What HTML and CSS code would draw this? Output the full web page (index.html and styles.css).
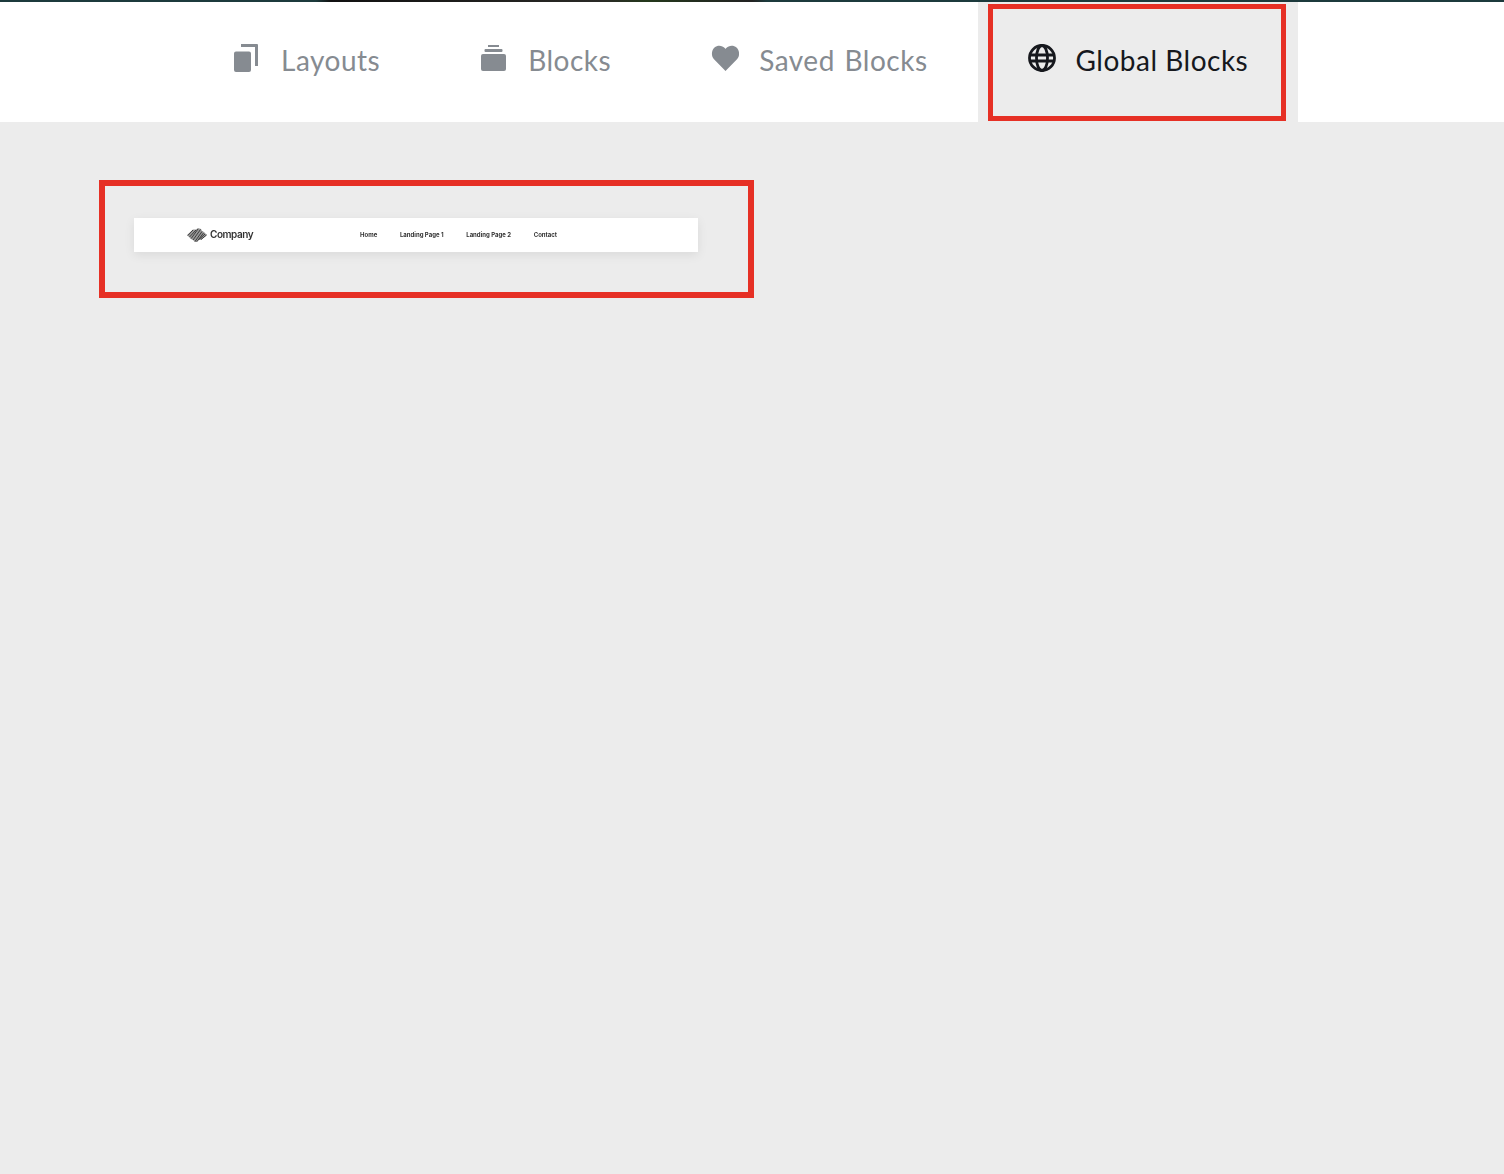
FILE: index.html
```html
<!DOCTYPE html>
<html lang="en">
<head>
<meta charset="utf-8">
<title>Global Blocks</title>
<link rel="stylesheet" href="styles.css">
</head>
<body>
<div class="strip"></div>
<nav class="tabs">
  <a class="tab">
    <svg class="icon" viewBox="0 0 28 28" width="28" height="28"><path d="M1 9.500a2 2 0 0 1 2-2h13a2 2 0 0 1 2 2V26a2 2 0 0 1-2 2H3a2 2 0 0 1-2-2z"/><path d="M8 0h16a1 1 0 0 1 1 1v21h-3V3H8z"/></svg>
    <span>Layouts</span>
  </a>
  <a class="tab">
    <svg class="icon" viewBox="0 0 28 28" width="28" height="28"><rect x="8" y="1" width="11" height="2"/><rect x="4.500" y="5" width="18" height="3" rx="1"/><rect x="1" y="10" width="25" height="17" rx="2"/></svg>
    <span>Blocks</span>
  </a>
  <a class="tab">
    <svg class="icon" viewBox="0 0 28 28" width="28" height="28"><path d="M14.500 27 3 15.200C0 12 .3 6.600 3.500 3.600c3-2.700 7.800-2.300 10.500.7l.5.600.5-.6c2.700-3 7.500-3.400 10.500-.7 3.200 3 3.500 8.400.5 11.600z"/></svg>
    <span>Saved Blocks</span>
  </a>
  <a class="tab tab-active">
    <svg class="icon icon-line" viewBox="0 0 28 28" width="28" height="28"><circle cx="14" cy="14" r="12.500"/><ellipse cx="14" cy="14" rx="5.500" ry="12.500"/><path d="M2 11h24M2 17h24"/></svg>
    <span>Global Blocks</span>
    <i class="mark mark-tab"></i>
  </a>
</nav>
<main class="content">
  <section class="block">
    <i class="mark mark-block"></i>
    <header class="preview">
      <div class="brand">
        <svg class="logo" viewBox="0 0 20 14" width="20" height="14"><polygon class="logo-fill" points="0 7 6 1.500 9 1.500 11 0 14 1 15 3 17 4 20 7 14 12 12 11.500 10 14 8 14 6 12 4 11"/><path d="M.8 7.500 6 2M2.500 9 9 2M4.200 10.500 11 1M6 12 13.500 1.500M8 13.500 15 3.500M10 13.500 16.500 5M12 11.500 18 6M14 11.500 19.500 7"/></svg>
        <span>Company</span>
      </div>
      <ul class="menu">
        <li>Home</li>
        <li>Landing Page 1</li>
        <li>Landing Page 2</li>
        <li>Contact</li>
      </ul>
    </header>
  </section>
</main>
</body>
</html>
```
FILE: styles.css
```css
* { box-sizing: border-box; }
html, body { margin: 0; height: 100%; }
body {
  background: #ececec;
  font-family: "Lato", "Open Sans", sans-serif;
  overflow: hidden;
}
.strip {
  height: 2px;
  background: linear-gradient(90deg, #1c3a3c 0, #1c3a3c 21%, #111 22%, #2a2a26 40%, #24381c 43%, #222 50%, #1c3a3c 51%, #1c3a3c 100%);
}
.tabs {
  display: flex;
  height: 120px;
  padding-left: 183px;
  background: #fff;
}
.tab {
  position: relative;
  display: flex;
  align-items: center;
  gap: 20px;
  padding: 0 50px 4px;
  font-size: 28px;
  letter-spacing: .5px;
  word-spacing: 2px;
  color: #868b91;
}
.tab-active {
  background: #ececec;
  color: #16181d;
  word-spacing: 0;
}
.icon { fill: #868b91; flex: none; margin-top: -4px; }
.icon-line { fill: none; stroke: #16181d; stroke-width: 2.8; }
.mark {
  position: absolute;
  display: block;
  border-style: solid;
  border-color: #e63025;
}
.mark-tab { left: 10px; top: 2px; width: 298px; height: 117px; border-width: 5px; }
.mark-block { left: -35px; top: -38px; width: 655px; height: 118px; border-width: 6px; }
.content { padding: 96px 0 0 134px; }
.block { position: relative; width: 564px; }
.preview {
  display: flex;
  align-items: center;
  height: 34px;
  padding-left: 53px;
  background: #fff;
  box-shadow: 0 3px 10px rgba(0, 0, 0, .08);
  font-family: "Inter", sans-serif;
  color: #333;
}
.brand {
  display: flex;
  align-items: center;
  gap: 3px;
  width: 173px;
  font-size: 10px;
  font-weight: 600;
  letter-spacing: -.45px;
  filter: blur(.3px);
}
.brand span { margin-top: -2px; }
.logo { fill: none; stroke: #333; stroke-width: .9; filter: blur(.2px); }
.logo-fill { fill: #999; stroke: none; }
.menu {
  display: flex;
  gap: 22.700px;
  margin: 0 0 1px;
  padding: 0;
  list-style: none;
  font-size: 6px;
  font-weight: 700;
  filter: blur(.25px);
}
```
